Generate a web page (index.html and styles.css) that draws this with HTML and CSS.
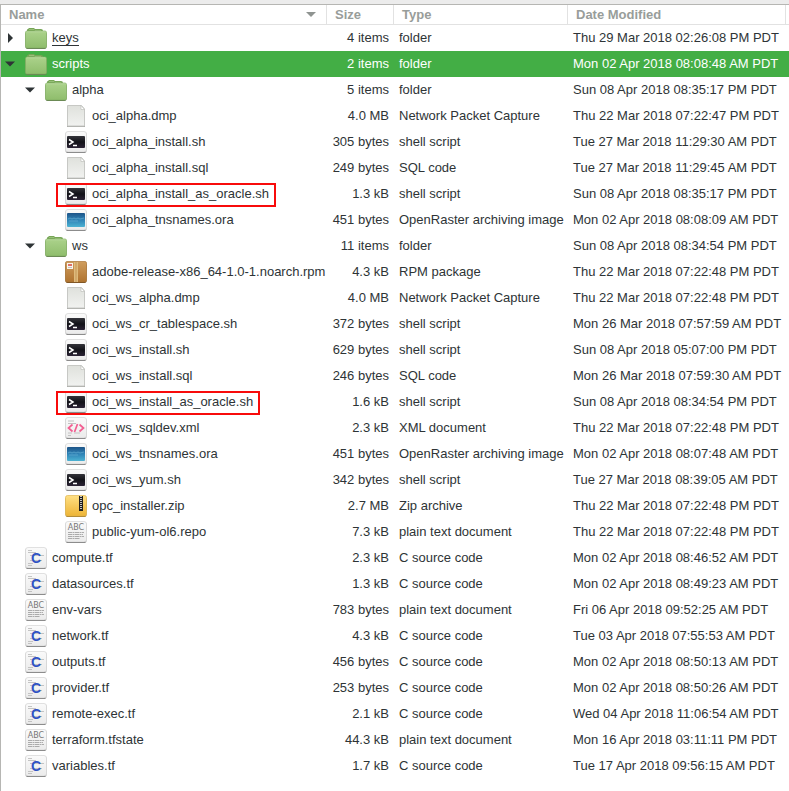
FILE: index.html
```html
<!DOCTYPE html>
<html lang="en">
<head>
<meta charset="utf-8">
<title>Files</title>
<link rel="stylesheet" href="styles.css">
</head>
<body>
<svg class="defs" aria-hidden="true">
  <defs>
    <linearGradient id="g-folder" x1="0" y1="0" x2="0" y2="1"><stop offset="0" stop-color="#abd28b"/><stop offset="1" stop-color="#8fbd6c"/></linearGradient>
    <linearGradient id="g-page" x1="0" y1="0" x2="0" y2="1"><stop offset="0" stop-color="#dfe1dc"/><stop offset="1" stop-color="#f1f2f0"/></linearGradient>
    <linearGradient id="g-tile" x1="0" y1="0" x2="0" y2="1"><stop offset="0" stop-color="#fafafa"/><stop offset="1" stop-color="#ebebeb"/></linearGradient>
    <linearGradient id="g-term" x1="0" y1="0" x2="0" y2="1"><stop offset="0" stop-color="#34343a"/><stop offset=".5" stop-color="#121218"/><stop offset="1" stop-color="#2b2335"/></linearGradient>
    <linearGradient id="g-sea" x1="0" y1="0" x2="0" y2="1"><stop offset="0" stop-color="#1d5488"/><stop offset=".5" stop-color="#2f83b6"/><stop offset="1" stop-color="#4cb2d2"/></linearGradient>
    <linearGradient id="g-box" x1="0" y1="0" x2="0" y2="1"><stop offset="0" stop-color="#cf9d5d"/><stop offset="1" stop-color="#b07430"/></linearGradient>
    <linearGradient id="g-zip" x1="0" y1="0" x2="0" y2="1"><stop offset="0" stop-color="#ffe084"/><stop offset="1" stop-color="#edb436"/></linearGradient>
    <g id="tile">
      <rect x="0" y="1" width="22" height="21" rx="3" fill="#cfcfcf"/>
      <rect x="1" y="2" width="20" height="20" rx="2" fill="#666"/>
      <rect x=".5" y=".5" width="21" height="20.5" rx="2.5" fill="url(#g-tile)" stroke="#d4d4d4" stroke-width=".7"/>
    </g>
  </defs>
  <symbol id="folder" viewBox="0 0 22 22">
    <path d="M2 6V3q0-1 1-1l1-1h5l1 1h6q2 0 2 2v3z" fill="#77a657"/>
    <path d="M4 2.5h5l1 1h6" fill="none" stroke="#a5ca87" stroke-width=".7"/>
    <rect x=".5" y="5" width="21" height="17" rx="2" fill="#60774f"/>
    <rect x=".5" y="4" width="21" height="17" rx="1.5" fill="url(#g-folder)" stroke="#83b063" stroke-width=".7"/>
    <path d="M1.5 4.8h19" stroke="#bddba4" stroke-width=".7"/>
  </symbol>
  <symbol id="page" viewBox="0 0 22 22">
    <path d="M2 21.5h18" stroke="#a9aaa6"/>
    <path d="M2.5 .5h14l3 3.500v17h-17z" fill="url(#g-page)" stroke="#c2c3bf" stroke-width=".9"/>
    <path d="M16 .5v4h3.500z" fill="#fff" stroke="#b9bab6" stroke-width=".6"/>
  </symbol>
  <symbol id="shell" viewBox="0 0 22 22">
    <use href="#tile"/>
    <rect x="2" y="5" width="18" height="12" rx="1" fill="url(#g-term)"/>
    <path d="M4 8.500l4 2.500-4 2.500M8 14.500h4" fill="none" stroke="#fff" stroke-width="1.500"/>
  </symbol>
  <symbol id="image" viewBox="0 0 22 22">
    <use href="#tile"/>
    <rect x="2" y="4" width="18" height="14" rx="1" fill="url(#g-sea)"/>
    <path d="M3 10l2-1 2 1 2-1 2 1 2-1 2 1 4-1M4 12h9" fill="none" stroke="#72b9db" stroke-width=".8" opacity=".7"/>
  </symbol>
  <symbol id="package" viewBox="0 0 22 22">
    <rect x=".5" y="2" width="21" height="20" rx="2" fill="#6c471d"/>
    <rect x=".5" y=".5" width="21" height="20.5" rx="1.500" fill="url(#g-box)" stroke="#aa7636" stroke-width=".7"/>
    <path d="M9 1h4v20H9z" fill="#dfbb7c"/>
    <path d="M11 1v20" stroke="#b98b4b" stroke-width=".7"/>
    <path d="M2 2h6v6H2z" fill="#f8f4ed"/>
    <path d="M3 4h4" stroke="#d44537" stroke-width="1.500"/>
    <path d="M3 6.500h4" stroke="#aaa" stroke-width=".7"/>
  </symbol>
  <symbol id="xml" viewBox="0 0 22 22">
    <use href="#tile"/>
    <path d="M3 4h6M3 6.500h8M3 16h4M3 18.500h3M9 16h6" stroke="#c2c2c2"/>
    <path d="M7.500 7.500L3.500 11l4 3.500M14.500 7.500l4 3.500-4 3.500M12.500 7l-3 8" fill="none" stroke="#f25e91" stroke-width="1.700"/>
  </symbol>
  <symbol id="zip" viewBox="0 0 22 22">
    <rect x=".5" y="2" width="21" height="20" rx="2" fill="#9c772b"/>
    <rect x=".5" y=".5" width="21" height="20.500" rx="2" fill="url(#g-zip)" stroke="#dfb650" stroke-width=".7"/>
    <path d="M14 1h4v15h-4z" fill="#22201d"/>
    <path d="M16 1v13" stroke="#eee" stroke-width="1.600" stroke-dasharray="1 1"/>
  </symbol>
  <symbol id="text" viewBox="0 0 22 22">
    <use href="#tile"/>
    <path d="M3 11.500h16M3 13.500h15M3 15.500h16M3 17.500h12" stroke="#999" stroke-width=".8" stroke-dasharray="4 .5 2 .5"/>
  </symbol>
  <symbol id="csource" viewBox="0 0 22 22">
    <use href="#tile"/>
    <path d="M3 3.500h4M3 5.500h8M5 8.500h14M5 13.500h12M3 16.500h5M3 18.500h4" stroke="#bdbdbd" stroke-width=".9"/>
  </symbol>
  <symbol id="open" viewBox="0 0 24 10"><path d="M4 2.500h10l-5 5z"/></symbol>
  <symbol id="closed" viewBox="0 0 24 10"><path d="M7 0v10l5-5z"/></symbol>
</svg>

<main class="browser">
<table class="files">
  <colgroup><col class="col-name"><col class="col-size"><col class="col-type"><col class="col-date"><col class="col-end"></colgroup>
  <thead>
    <tr>
      <th aria-sort="ascending"><button class="sort">Name<svg class="sort-arrow" viewBox="0 0 10 5" aria-hidden="true"><path d="M0 0h10L5 5z"/></svg></button></th>
      <th><button class="sort">Size</button></th>
      <th><button class="sort">Type</button></th>
      <th><button class="sort">Date Modified</button></th>
      <td></td>
    </tr>
  </thead>
  <tbody>
    <tr><td><div class="entry"><button class="toggle" aria-label="Expand keys"><svg><use href="#closed"/></svg></button><span class="label"><svg class="icon"><use href="#folder"/></svg><span class="focused">keys</span></span></div></td><td>4 items</td><td>folder</td><td colspan="2">Thu 29 Mar 2018 02:26:08 PM PDT</td></tr>
    <tr class="selected"><td><div class="entry"><button class="toggle" aria-label="Collapse scripts"><svg><use href="#open"/></svg></button><span class="label"><svg class="icon"><use href="#folder"/></svg>scripts</span></div></td><td>2 items</td><td>folder</td><td colspan="2">Mon 02 Apr 2018 08:08:48 AM PDT</td></tr>
    <tr><td><div class="entry level-1"><button class="toggle" aria-label="Collapse alpha"><svg><use href="#open"/></svg></button><span class="label"><svg class="icon"><use href="#folder"/></svg>alpha</span></div></td><td>5 items</td><td>folder</td><td colspan="2">Sun 08 Apr 2018 08:35:17 PM PDT</td></tr>
    <tr><td><div class="entry leaf level-2"><span class="label"><svg class="icon"><use href="#page"/></svg>oci_alpha.dmp</span></div></td><td>4.0 MB</td><td>Network Packet Capture</td><td colspan="2">Thu 22 Mar 2018 07:22:47 PM PDT</td></tr>
    <tr><td><div class="entry leaf level-2"><span class="label"><svg class="icon"><use href="#shell"/></svg>oci_alpha_install.sh</span></div></td><td>305 bytes</td><td>shell script</td><td colspan="2">Tue 27 Mar 2018 11:29:30 AM PDT</td></tr>
    <tr><td><div class="entry leaf level-2"><span class="label"><svg class="icon"><use href="#page"/></svg>oci_alpha_install.sql</span></div></td><td>249 bytes</td><td>SQL code</td><td colspan="2">Tue 27 Mar 2018 11:29:45 AM PDT</td></tr>
    <tr><td><div class="entry leaf level-2"><span class="label marked"><svg class="icon"><use href="#shell"/></svg>oci_alpha_install_as_oracle.sh</span></div></td><td>1.3 kB</td><td>shell script</td><td colspan="2">Sun 08 Apr 2018 08:35:17 PM PDT</td></tr>
    <tr><td><div class="entry leaf level-2"><span class="label"><svg class="icon"><use href="#image"/></svg>oci_alpha_tnsnames.ora</span></div></td><td>451 bytes</td><td>OpenRaster archiving image</td><td colspan="2">Mon 02 Apr 2018 08:08:09 AM PDT</td></tr>
    <tr><td><div class="entry level-1"><button class="toggle" aria-label="Collapse ws"><svg><use href="#open"/></svg></button><span class="label"><svg class="icon"><use href="#folder"/></svg>ws</span></div></td><td>11 items</td><td>folder</td><td colspan="2">Sun 08 Apr 2018 08:34:54 PM PDT</td></tr>
    <tr><td><div class="entry leaf level-2"><span class="label"><svg class="icon"><use href="#package"/></svg>adobe-release-x86_64-1.0-1.noarch.rpm</span></div></td><td>4.3 kB</td><td>RPM package</td><td colspan="2">Thu 22 Mar 2018 07:22:48 PM PDT</td></tr>
    <tr><td><div class="entry leaf level-2"><span class="label"><svg class="icon"><use href="#page"/></svg>oci_ws_alpha.dmp</span></div></td><td>4.0 MB</td><td>Network Packet Capture</td><td colspan="2">Thu 22 Mar 2018 07:22:48 PM PDT</td></tr>
    <tr><td><div class="entry leaf level-2"><span class="label"><svg class="icon"><use href="#shell"/></svg>oci_ws_cr_tablespace.sh</span></div></td><td>372 bytes</td><td>shell script</td><td colspan="2">Mon 26 Mar 2018 07:57:59 AM PDT</td></tr>
    <tr><td><div class="entry leaf level-2"><span class="label"><svg class="icon"><use href="#shell"/></svg>oci_ws_install.sh</span></div></td><td>629 bytes</td><td>shell script</td><td colspan="2">Sun 08 Apr 2018 05:07:00 PM PDT</td></tr>
    <tr><td><div class="entry leaf level-2"><span class="label"><svg class="icon"><use href="#page"/></svg>oci_ws_install.sql</span></div></td><td>246 bytes</td><td>SQL code</td><td colspan="2">Mon 26 Mar 2018 07:59:30 AM PDT</td></tr>
    <tr><td><div class="entry leaf level-2"><span class="label marked"><svg class="icon"><use href="#shell"/></svg>oci_ws_install_as_oracle.sh</span></div></td><td>1.6 kB</td><td>shell script</td><td colspan="2">Sun 08 Apr 2018 08:34:54 PM PDT</td></tr>
    <tr><td><div class="entry leaf level-2"><span class="label"><svg class="icon"><use href="#xml"/></svg>oci_ws_sqldev.xml</span></div></td><td>2.3 kB</td><td>XML document</td><td colspan="2">Thu 22 Mar 2018 07:22:48 PM PDT</td></tr>
    <tr><td><div class="entry leaf level-2"><span class="label"><svg class="icon"><use href="#image"/></svg>oci_ws_tnsnames.ora</span></div></td><td>451 bytes</td><td>OpenRaster archiving image</td><td colspan="2">Mon 02 Apr 2018 08:07:48 AM PDT</td></tr>
    <tr><td><div class="entry leaf level-2"><span class="label"><svg class="icon"><use href="#shell"/></svg>oci_ws_yum.sh</span></div></td><td>342 bytes</td><td>shell script</td><td colspan="2">Tue 27 Mar 2018 08:39:05 AM PDT</td></tr>
    <tr><td><div class="entry leaf level-2"><span class="label"><svg class="icon"><use href="#zip"/></svg>opc_installer.zip</span></div></td><td>2.7 MB</td><td>Zip archive</td><td colspan="2">Thu 22 Mar 2018 07:22:48 PM PDT</td></tr>
    <tr><td><div class="entry leaf level-2"><span class="label"><svg class="icon"><use href="#text"/><text x="11" y="9" class="glyph-abc">ABC</text></svg>public-yum-ol6.repo</span></div></td><td>7.3 kB</td><td>plain text document</td><td colspan="2">Thu 22 Mar 2018 07:22:48 PM PDT</td></tr>
    <tr><td><div class="entry leaf"><span class="label"><svg class="icon"><use href="#csource"/><text x="11" y="16" class="glyph-c">C</text></svg>compute.tf</span></div></td><td>2.3 kB</td><td>C source code</td><td colspan="2">Mon 02 Apr 2018 08:46:52 AM PDT</td></tr>
    <tr><td><div class="entry leaf"><span class="label"><svg class="icon"><use href="#csource"/><text x="11" y="16" class="glyph-c">C</text></svg>datasources.tf</span></div></td><td>1.3 kB</td><td>C source code</td><td colspan="2">Mon 02 Apr 2018 08:49:23 AM PDT</td></tr>
    <tr><td><div class="entry leaf"><span class="label"><svg class="icon"><use href="#text"/><text x="11" y="9" class="glyph-abc">ABC</text></svg>env-vars</span></div></td><td>783 bytes</td><td>plain text document</td><td colspan="2">Fri 06 Apr 2018 09:52:25 AM PDT</td></tr>
    <tr><td><div class="entry leaf"><span class="label"><svg class="icon"><use href="#csource"/><text x="11" y="16" class="glyph-c">C</text></svg>network.tf</span></div></td><td>4.3 kB</td><td>C source code</td><td colspan="2">Tue 03 Apr 2018 07:55:53 AM PDT</td></tr>
    <tr><td><div class="entry leaf"><span class="label"><svg class="icon"><use href="#csource"/><text x="11" y="16" class="glyph-c">C</text></svg>outputs.tf</span></div></td><td>456 bytes</td><td>C source code</td><td colspan="2">Mon 02 Apr 2018 08:50:13 AM PDT</td></tr>
    <tr><td><div class="entry leaf"><span class="label"><svg class="icon"><use href="#csource"/><text x="11" y="16" class="glyph-c">C</text></svg>provider.tf</span></div></td><td>253 bytes</td><td>C source code</td><td colspan="2">Mon 02 Apr 2018 08:50:26 AM PDT</td></tr>
    <tr><td><div class="entry leaf"><span class="label"><svg class="icon"><use href="#csource"/><text x="11" y="16" class="glyph-c">C</text></svg>remote-exec.tf</span></div></td><td>2.1 kB</td><td>C source code</td><td colspan="2">Wed 04 Apr 2018 11:06:54 AM PDT</td></tr>
    <tr><td><div class="entry leaf"><span class="label"><svg class="icon"><use href="#text"/><text x="11" y="9" class="glyph-abc">ABC</text></svg>terraform.tfstate</span></div></td><td>44.3 kB</td><td>plain text document</td><td colspan="2">Mon 16 Apr 2018 03:11:11 PM PDT</td></tr>
    <tr><td><div class="entry leaf"><span class="label"><svg class="icon"><use href="#csource"/><text x="11" y="16" class="glyph-c">C</text></svg>variables.tf</span></div></td><td>1.7 kB</td><td>C source code</td><td colspan="2">Tue 17 Apr 2018 09:56:15 AM PDT</td></tr>
  </tbody>
</table>
</main>
</body>
</html>
```
FILE: styles.css
```css
* {
  box-sizing: border-box;
}

body {
  margin: 0;
  padding-top: 4px;
  min-height: 100vh;
  display: flex;
  flex-direction: column;
  background: #ececec;
  color: #2e3436;
  font: 13px/16px "Liberation Sans", Arial, sans-serif;
}

.defs {
  position: absolute;
  width: 0;
  height: 0;
}

.browser {
  flex: 1;
  border-top: 1px solid #b6b6b3;
  border-left: 1px solid #b6b6b3;
  background: #fff;
}

.files {
  width: 100%;
  table-layout: fixed;
  border-collapse: separate;
  border-spacing: 0;
  white-space: nowrap;
}

.col-size { width: 67px; }
.col-type { width: 174px; }
.col-date { width: 218px; }
.col-end { width: 3px; }

td,
th {
  padding: 0;
  text-align: left;
}

thead th,
thead td {
  height: 20px;
  border-bottom: 1px solid #e2e2e2;
}

th {
  border-right: 1px solid #e2e2e2;
}

button {
  border: 0;
  padding: 0;
  background: none;
  color: inherit;
  font: inherit;
}

.sort {
  display: flex;
  align-items: center;
  justify-content: space-between;
  width: 100%;
  height: 19px;
  padding: 0 10px 0 8px;
  color: #989d9a;
  font-weight: bold;
}

.sort-arrow {
  width: 10px;
  height: 5px;
  fill: #8f9491;
}

tbody td {
  height: 26px;
  padding-left: 5px;
}

tbody td:first-child {
  padding: 0;
}

tbody td:nth-child(2) {
  padding: 0 5px 0 0;
  text-align: right;
}

.selected {
  background: #43ae45;
  color: #fff;
}

.entry {
  display: flex;
  align-items: center;
}

.level-1 { padding-left: 20px; }
.level-2 { padding-left: 40px; }

.toggle {
  width: 24px;
  height: 22px;
  display: flex;
  align-items: center;
}

.toggle svg {
  width: 24px;
  height: 10px;
  fill: #2e3436;
}

.leaf::before {
  content: "";
  width: 24px;
}

.label {
  position: relative;
  display: flex;
  align-items: center;
  gap: 5px;
}

.icon {
  width: 22px;
  height: 22px;
}

.focused {
  border-bottom: 1px solid #2e3436;
  line-height: 14px;
}

.marked::after {
  content: "";
  position: absolute;
  inset: 0 -7px -2px -9px;
  border: 2px solid #f80b0b;
}

.glyph-abc {
  font: 8px "DejaVu Sans", sans-serif;
  fill: #777;
  text-anchor: middle;
}

.glyph-c {
  font: bold 14px "Liberation Sans", Arial, sans-serif;
  fill: #2f52c4;
  text-anchor: middle;
}
```
